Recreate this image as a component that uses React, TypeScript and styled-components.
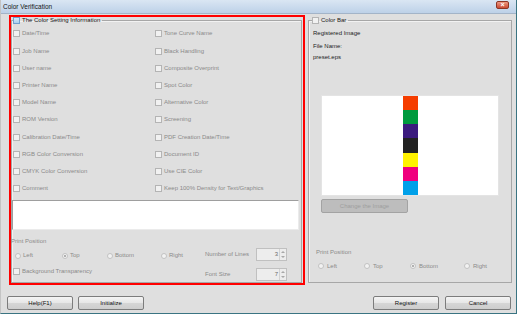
import React from "react"
import styled, { createGlobalStyle } from "styled-components"

const GlobalStyle = createGlobalStyle`
  html,
  body {
    margin: 0;
    padding: 0;
    background: #dfdfdf;
  }
  body {
    font-family: "Liberation Sans", Arial, sans-serif;
  }
  * {
    box-sizing: border-box;
  }
`

const Window = styled.div`
  width: 517px;
  height: 314px;
  display: flex;
  flex-direction: column;
  background: #dfdfdf;
  border-left: 1px solid #c4c4c4;
  border-right: 1px solid #3a7482;
  border-bottom: 1px solid #3a7482;
  font-size: 6px;
  line-height: 7px;
  color: #1e1e1e;
  overflow: hidden;
`

const TitleBar = styled.div`
  height: 14px;
  flex: none;
  display: flex;
  align-items: center;
  justify-content: space-between;
  padding: 0 7px 0 2px;
  background: linear-gradient(#dae6f3, #bdd1e8);
  border-bottom: 1px solid #a3b4c8;
  font-size: 6.5px;
  color: #151515;
`

const CloseButton = styled.div`
  flex: none;
  width: 13px;
  height: 8px;
  margin-top: -3px;
  border: 1px solid #8d3524;
  border-radius: 2px;
  background: linear-gradient(#ee9882, #c94a33);
  color: #fff;
  font-size: 7px;
  line-height: 6px;
  text-align: center;
  font-weight: bold;
`

const Content = styled.div`
  flex: none;
  display: flex;
  gap: 3px;
  height: 271px;
  padding: 1px 0 0 8px;
`

const RedFrame = styled.div`
  width: 296px;
  height: 270px;
  border: 2px solid #ff0000;
  padding-right: 1px;
  display: flex;
`

const GroupBox = styled.fieldset<{ $w?: number; $h: number; $top?: number }>`
  margin: ${(p) => p.$top ?? 0}px 0 0 0;
  padding: 0;
  min-width: 0;
  width: ${(p) => (p.$w ? `${p.$w}px` : "100%")};
  height: ${(p) => p.$h}px;
  border: 1px solid #a7a7a7;
  box-shadow: inset 1px 1px 0 #f2f2f2;
  display: flex;
  flex-direction: column;
`

const Legend = styled.legend<{ $indent: number }>`
  display: flex;
  align-items: center;
  gap: 2px;
  margin-left: ${(p) => p.$indent}px;
  padding: 0 2px 0 0;
  line-height: 7px;
  color: #141414;
`

const CheckBox = styled.span<{ $focus?: boolean }>`
  flex: none;
  width: 7px;
  height: 7px;
  border: 1px solid ${(p) => (p.$focus ? "#6f9fcf" : "#b4b4b4")};
  background: ${(p) =>
    p.$focus ? "linear-gradient(#d6ebfa, #a9d0ef)" : "#f1f1f1"};
`

const OptionGrid = styled.div`
  display: grid;
  grid-template-columns: 142px 1fr;
  grid-template-rows: repeat(10, 17.2px);
  grid-auto-flow: column;
  padding: 1.4px 0 0 1px;
`

const OptionRow = styled.label`
  display: flex;
  align-items: center;
  gap: 2px;
  color: #8a8a8a;
  white-space: nowrap;
`

const CommentBox = styled.div`
  height: 30px;
  margin: 2.6px 2px 0 0;
  background: #fff;
  border: 1px solid;
  border-color: #9e9e9e #ebebeb #ebebeb #9e9e9e;
`

const BottomArea = styled.div`
  display: flex;
`

const PositionCol = styled.div`
  width: 193px;
  display: flex;
  flex-direction: column;
  padding-top: 8px;
`

const SectionLabel = styled.div<{ $indent: number; $gap?: number }>`
  margin: ${(p) => p.$gap ?? 0}px 0 0 ${(p) => p.$indent}px;
  color: #8a8a8a;
`

const RadioRow = styled.div<{ $gap: number; $indent: number }>`
  display: flex;
  align-items: center;
  height: 10px;
  margin-top: ${(p) => p.$gap}px;
  padding-left: ${(p) => p.$indent}px;
`

const RadioItem = styled.div<{ $w: number; $gap: number }>`
  width: ${(p) => p.$w}px;
  display: flex;
  align-items: center;
  gap: ${(p) => p.$gap}px;
  color: #8a8a8a;
`

const Radio = styled.span<{ $on?: boolean }>`
  position: relative;
  flex: none;
  width: 6px;
  height: 6px;
  border-radius: 50%;
  border: 1px solid #c2c2c2;
  background: #f2f2f2;

  &::after {
    content: "";
    display: ${(p) => (p.$on ? "block" : "none")};
    position: absolute;
    left: 1px;
    top: 1px;
    width: 2px;
    height: 2px;
    border-radius: 50%;
    background: #9a9a9a;
  }
`

const CheckRow = styled.label`
  display: flex;
  align-items: center;
  gap: 2px;
  height: 10px;
  margin-top: 6px;
  padding-left: 1px;
  color: #8a8a8a;
`

const SpinGrid = styled.div`
  display: grid;
  grid-template-columns: 51px 31px;
  grid-auto-rows: 13px;
  row-gap: 7px;
  align-items: center;
  padding-top: 18px;
  color: #8a8a8a;
`

const SpinBox = styled.div`
  height: 13px;
  display: flex;
  border: 1px solid #c0c0c0;
  background: #ededed;
`

const SpinValue = styled.span`
  flex: 1;
  text-align: right;
  padding: 2px 1px 0 0;
  color: #6a6a6a;
`

const SpinArrows = styled.span`
  width: 7px;
  display: flex;
  flex-direction: column;
  border-left: 1px solid #d2d2d2;
`

const Arrow = styled.span<{ $down?: boolean }>`
  flex: 1;
  display: flex;
  align-items: center;
  justify-content: center;

  &::before {
    content: "";
    border-left: 2px solid transparent;
    border-right: 2px solid transparent;
    ${(p) =>
      p.$down
        ? "border-top: 2px solid #a8a8a8;"
        : "border-bottom: 2px solid #a8a8a8;"}
  }
`

const PanelBody = styled.div`
  display: flex;
  flex-direction: column;
  padding-left: 4px;
`

const InfoText = styled.div<{ $gap: number }>`
  margin-top: ${(p) => p.$gap}px;
  color: #1b1b1b;
`

const ImageBox = styled.div`
  width: 178px;
  height: 101px;
  margin: 34px 0 0 8px;
  background: #fff;
  border: 1px solid #e4e4e4;
  display: flex;
  justify-content: center;
`

const ColorStrip = styled.div`
  width: 15px;
  display: flex;
  flex-direction: column;
`

const Stripe = styled.span<{ $c: string }>`
  flex: 1;
  background: ${(p) => p.$c};
`

const DisabledButton = styled.div`
  width: 87px;
  height: 14px;
  margin: 3px 0 0 8px;
  border: 1px solid #a3a3a3;
  border-radius: 2px;
  background: #bdbdbd;
  color: #9d9d9d;
  line-height: 12px;
  text-align: center;
`

const Footer = styled.div`
  display: flex;
  justify-content: space-between;
  margin-top: 11px;
  padding: 0 5px 0 6px;
`

const ButtonGroup = styled.div<{ $gap: number }>`
  display: flex;
  gap: ${(p) => p.$gap}px;
`

const Button = styled.div`
  width: 66px;
  height: 14px;
  border: 1px solid #7c7c7c;
  border-radius: 2px;
  background: linear-gradient(#f4f4f4, #e6e6e6 50%, #d6d6d6 51%, #cdcdcd);
  color: #111;
  line-height: 12px;
  text-align: center;
`

const LEFT_OPTIONS = [
  "Date/Time",
  "Job Name",
  "User name",
  "Printer Name",
  "Model Name",
  "ROM Version",
  "Calibration Date/Time",
  "RGB Color Conversion",
  "CMYK Color Conversion",
  "Comment"
]

const RIGHT_OPTIONS = [
  "Tone Curve Name",
  "Black Handling",
  "Composite Overprint",
  "Spot Color",
  "Alternative Color",
  "Screening",
  "PDF Creation Date/Time",
  "Document ID",
  "Use CIE Color",
  "Keep 100% Density for Text/Graphics"
]

const STRIPES = ["#f53d00", "#009a3e", "#3b1b7e", "#222222", "#fff200", "#f0007e", "#00a0e9"]

const LEFT_POSITIONS = [
  { title: "Left", w: 47 },
  { title: "Top", w: 45, on: true },
  { title: "Bottom", w: 54 },
  { title: "Right", w: 30 }
]

const RIGHT_POSITIONS = [
  { title: "Left", w: 46 },
  { title: "Top", w: 46 },
  { title: "Bottom", w: 54, on: true },
  { title: "Right", w: 30 }
]

const SpinField = ({ value }: { value: number }) => (
  <SpinBox>
    <SpinValue>{value}</SpinValue>
    <SpinArrows>
      <Arrow />
      <Arrow $down />
    </SpinArrows>
  </SpinBox>
)

const App = () => {
  return (
    <>
      <GlobalStyle />
      <Window>
        <TitleBar>
          <span>Color Verification</span>
          <CloseButton>×</CloseButton>
        </TitleBar>

        <Content>
          <RedFrame>
            <GroupBox $h={266}>
              <Legend $indent={1}>
                <CheckBox $focus />
                The Color Setting Information
              </Legend>

              <OptionGrid>
                {[...LEFT_OPTIONS, ...RIGHT_OPTIONS].map((o) => (
                  <OptionRow key={o}>
                    <CheckBox />
                    {o}
                  </OptionRow>
                ))}
              </OptionGrid>

              <CommentBox />

              <BottomArea>
                <PositionCol>
                  <SectionLabel $indent={-1}>Print Position</SectionLabel>
                  <RadioRow $gap={6} $indent={3}>
                    {LEFT_POSITIONS.map((p) => (
                      <RadioItem key={p.title} $w={p.w} $gap={2}>
                        <Radio $on={p.on} />
                        {p.title}
                      </RadioItem>
                    ))}
                  </RadioRow>
                  <CheckRow>
                    <CheckBox />
                    Background Transparency
                  </CheckRow>
                </PositionCol>

                <SpinGrid>
                  <span>Number of Lines</span>
                  <SpinField value={3} />
                  <span>Font Size</span>
                  <SpinField value={7} />
                </SpinGrid>
              </BottomArea>
            </GroupBox>
          </RedFrame>

          <GroupBox $w={204} $h={266} $top={2}>
            <Legend $indent={3}>
              <CheckBox />
              Color Bar
            </Legend>
            <PanelBody>
              <InfoText $gap={6}>Registered Image</InfoText>
              <InfoText $gap={6}>File Name:</InfoText>
              <InfoText $gap={4}>preset.eps</InfoText>

              <ImageBox>
                <ColorStrip>
                  {STRIPES.map((c) => (
                    <Stripe key={c} $c={c} />
                  ))}
                </ColorStrip>
              </ImageBox>

              <DisabledButton>Change the Image</DisabledButton>

              <SectionLabel $indent={3} $gap={36}>
                Print Position
              </SectionLabel>
              <RadioRow $gap={5} $indent={5}>
                {RIGHT_POSITIONS.map((p) => (
                  <RadioItem key={p.title} $w={p.w} $gap={3}>
                    <Radio $on={p.on} />
                    {p.title}
                  </RadioItem>
                ))}
              </RadioRow>
            </PanelBody>
          </GroupBox>
        </Content>

        <Footer>
          <ButtonGroup $gap={5}>
            <Button>Help(F1)</Button>
            <Button>Initialize</Button>
          </ButtonGroup>
          <ButtonGroup $gap={6}>
            <Button>Register</Button>
            <Button>Cancel</Button>
          </ButtonGroup>
        </Footer>
      </Window>
    </>
  )
}

export default App
